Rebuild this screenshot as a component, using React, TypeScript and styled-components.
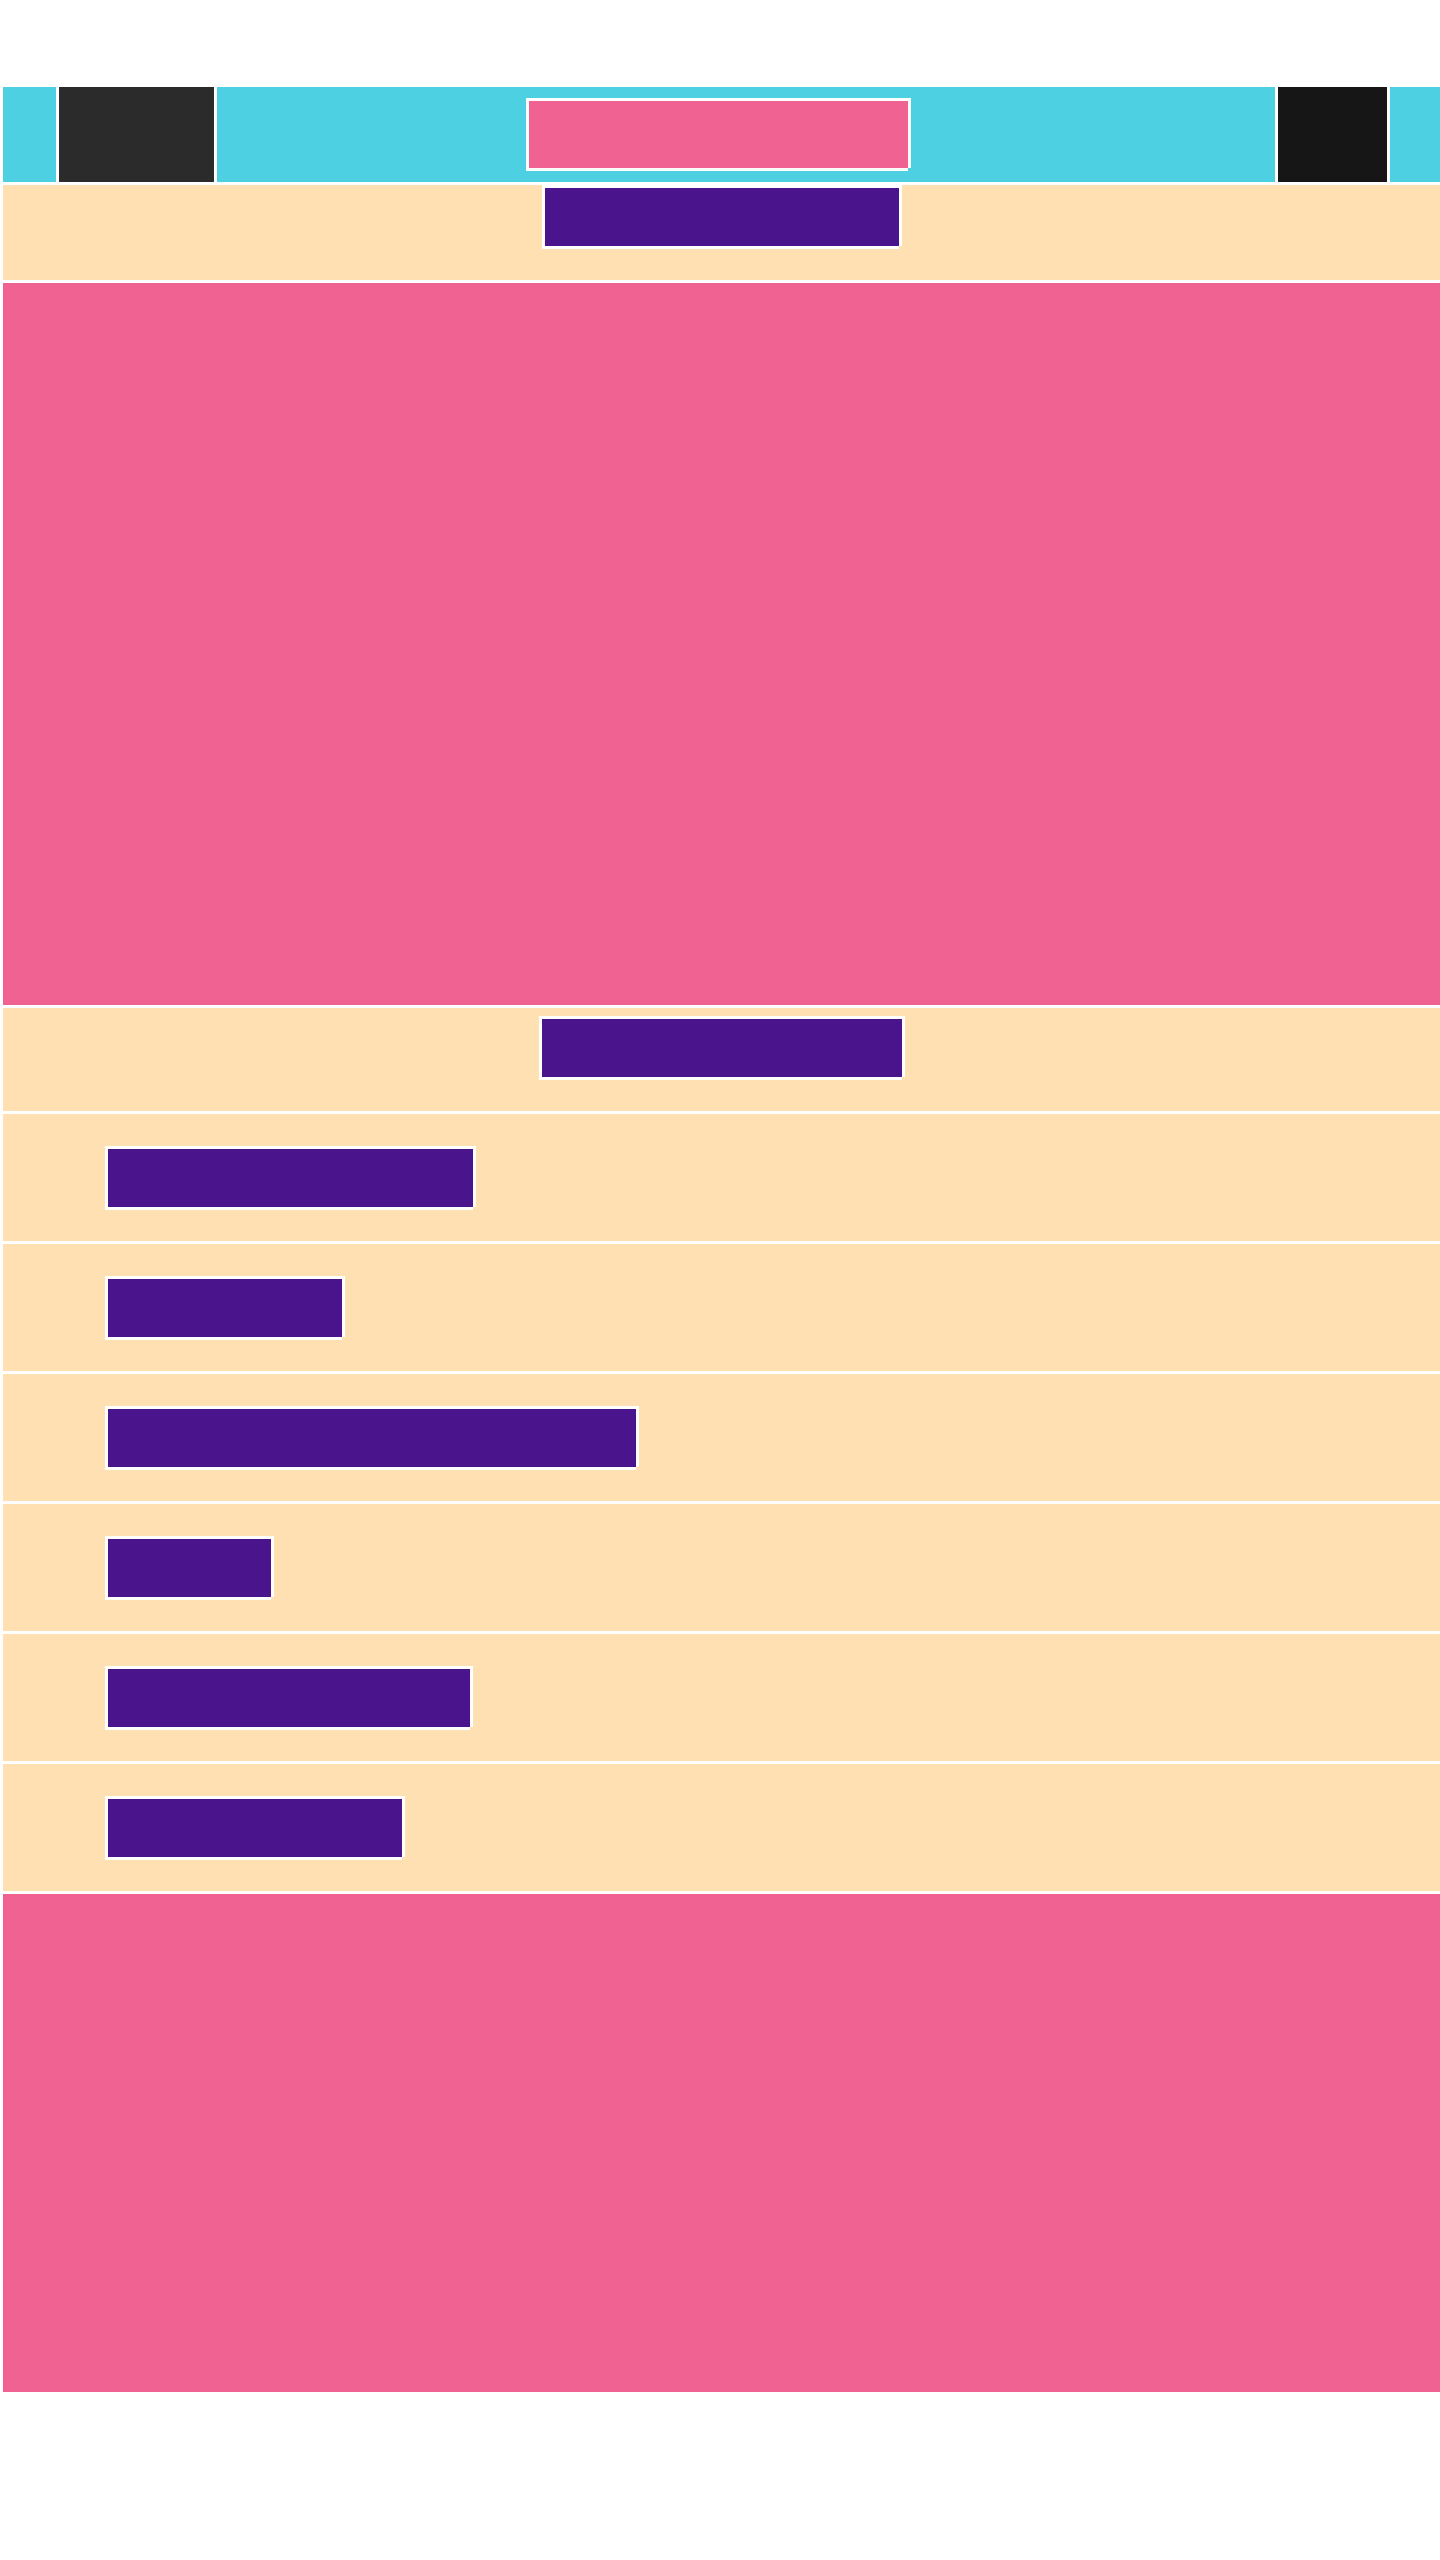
import styled, { createGlobalStyle } from "styled-components";

const GlobalStyle = createGlobalStyle`
  html, body {
    margin: 0;
    padding: 0;
    background: #ffffff;
    font-family: "Liberation Sans", Arial, sans-serif;
  }
`

const colors = {
  cyan: '#4dd0e1',
  pink: '#f06292',
  beige: '#ffe0b2',
  purple: '#4a148c',
  dark: '#2b2b2b',
  darker: '#161616',
}

// white frame around a block, bottom-right corner left open
const frame = `
  box-shadow:
    -3px -3px 0 #fff,
    3px -3px 0 #fff,
    3px 0 0 #fff,
    -3px 3px 0 #fff,
    0 3px 0 #fff;
`

const Page = styled.div`
  width: 1437px;
  padding: 87px 0 0 3px;
  display: flex;
  flex-direction: column;
  gap: 3px;
`

const Header = styled.header`
  height: 95px;
  display: grid;
  grid-template-columns: 53px 155px 1fr 109px 50px;
  gap: 3px;
`

const HeaderCell = styled.div<{ $tone: string }>`
  background: ${(p) => p.$tone};
`

const HeaderMiddle = styled.div`
  background: ${colors.cyan};
  display: flex;
  align-items: flex-start;
  padding: 14px 0 0 312px;
`

const Title = styled.div`
  width: 379px;
  height: 67px;
  background: ${colors.pink};
  ${frame}
`

const Strip = styled.section<{ $height: number; $top: number }>`
  height: ${(p) => p.$height}px;
  background: ${colors.beige};
  display: flex;
  justify-content: center;
  align-items: flex-start;
  padding-top: ${(p) => p.$top}px;
  box-sizing: border-box;
`

const Panel = styled.div<{ $height: number }>`
  height: ${(p) => p.$height}px;
  background: ${colors.pink};
`

const Label = styled.div<{ $width: number }>`
  width: ${(p) => p.$width}px;
  height: 58px;
  background: ${colors.purple};
  ${frame}
`

const List = styled.ul`
  list-style: none;
  margin: 0;
  padding: 0;
  display: flex;
  flex-direction: column;
  gap: 3px;
`

const Item = styled.li`
  height: 127px;
  background: ${colors.beige};
  box-sizing: border-box;
  padding: 35px 0 0 105px;
  display: flex;
  align-items: flex-start;
`

const items = [365, 234, 528, 163, 362, 294]

const App = () => {
  return (
    <>
      <GlobalStyle />
      <Page>
        <Header>
          <HeaderCell $tone={colors.cyan} />
          <HeaderCell $tone={colors.dark} />
          <HeaderMiddle>
            <Title />
          </HeaderMiddle>
          <HeaderCell $tone={colors.darker} />
          <HeaderCell $tone={colors.cyan} />
        </Header>
        <Strip $height={95} $top={3}>
          <Label $width={354} />
        </Strip>
        <Panel $height={722} />
        <Strip $height={103} $top={11}>
          <Label $width={360} />
        </Strip>
        <List>
          {items.map((w, i) => (
            <Item key={i}>
              <Label $width={w} />
            </Item>
          ))}
        </List>
        <Panel $height={498} />
      </Page>
    </>
  )
}

export default App
